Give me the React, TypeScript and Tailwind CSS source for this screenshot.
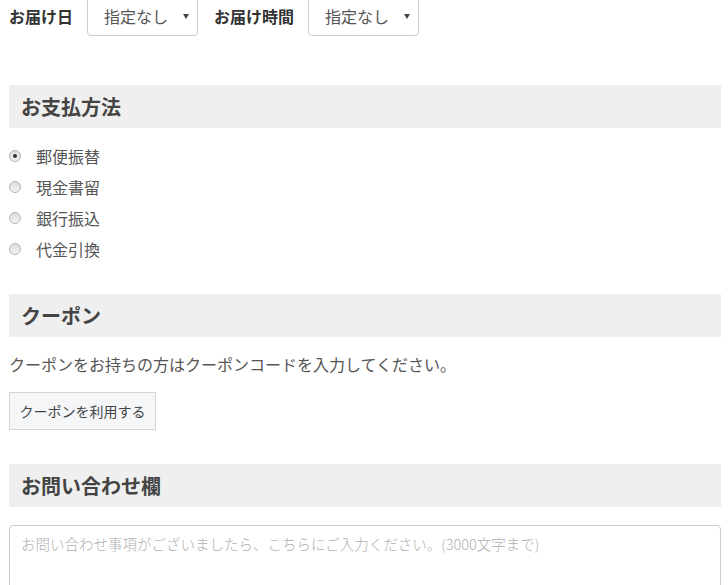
import { useState } from "react"

const methods = ["郵便振替", "現金書留", "銀行振込", "代金引換"]

function Select() {
  return (
    <div className="relative w-[111px] h-[40px] rounded-[4px] border border-[#cccccc] bg-white">
      <span className="absolute left-[16px] top-[19px] -translate-y-1/2 text-[16px] leading-[20px] text-[#555555]">
        指定なし
      </span>
      <svg className="absolute right-[8px] top-[17px]" width="6" height="5" viewBox="0 0 6 5">
        <path d="M0 0 L6 0 L3 5 Z" fill="#444444" />
      </svg>
    </div>
  )
}

function SectionTitle({ children }: { children: React.ReactNode }) {
  return (
    <div className="h-[43px] bg-[#efefef] px-[12px] flex items-center">
      <h2 className="text-[20px] leading-[24px] font-bold text-[#444444]">{children}</h2>
    </div>
  )
}

export default function App() {
  const [method, setMethod] = useState(0)

  return (
    <div className="min-h-screen bg-white pl-[9px] pr-[7px] font-['Noto_Sans_CJK_JP',sans-serif] overflow-hidden">
      {/* Delivery date / time */}
      <div className="-mt-[4px] h-[40px] flex items-center">
        <span className="text-[16px] leading-[20px] font-bold text-[#333333] mr-[14px]">お届け日</span>
        <Select />
        <span className="ml-[16px] text-[16px] leading-[20px] font-bold text-[#333333] mr-[14px]">お届け時間</span>
        <Select />
      </div>

      {/* Payment */}
      <div className="mt-[49px]">
        <SectionTitle>お支払方法</SectionTitle>
        <div className="mt-[12px]">
          {methods.map((m, i) => (
            <label key={m} className="h-[31px] flex items-center cursor-pointer" onClick={() => setMethod(i)}>
              <span className="w-[12px] h-[12px] rounded-full border border-[#b4b4b4] bg-gradient-to-b from-[#dcdcdc] to-[#f4f4f4] flex items-center justify-center">
                {method === i && <span className="w-[4px] h-[4px] rounded-full bg-[#333333]" />}
              </span>
              <span className="ml-[15px] text-[16px] leading-[20px] text-[#555555]">{m}</span>
            </label>
          ))}
        </div>
      </div>

      {/* Coupon */}
      <div className="mt-[30px]">
        <SectionTitle>クーポン</SectionTitle>
        <p className="mt-[15px] text-[16px] leading-[24px] text-[#555555]">
          クーポンをお持ちの方はクーポンコードを入力してください。
        </p>
        <button className="mt-[16px] h-[38px] w-[147px] border border-[#d5d5d5] bg-[#f5f6f8] text-[14px] leading-[18px] text-[#444444]">
          クーポンを利用する
        </button>
      </div>

      {/* Inquiry */}
      <div className="mt-[34px]">
        <SectionTitle>お問い合わせ欄</SectionTitle>
        <textarea
          className="mt-[18px] block w-full h-[150px] rounded-[4px] border border-[#cccccc] px-[11px] py-[8px] text-[14.5px] leading-[20px] text-[#555555] placeholder:text-[#b0b0b0] resize-none outline-none font-light"
          placeholder="お問い合わせ事項がございましたら、こちらにご入力ください。(3000文字まで)"
        />
      </div>
    </div>
  )
}
